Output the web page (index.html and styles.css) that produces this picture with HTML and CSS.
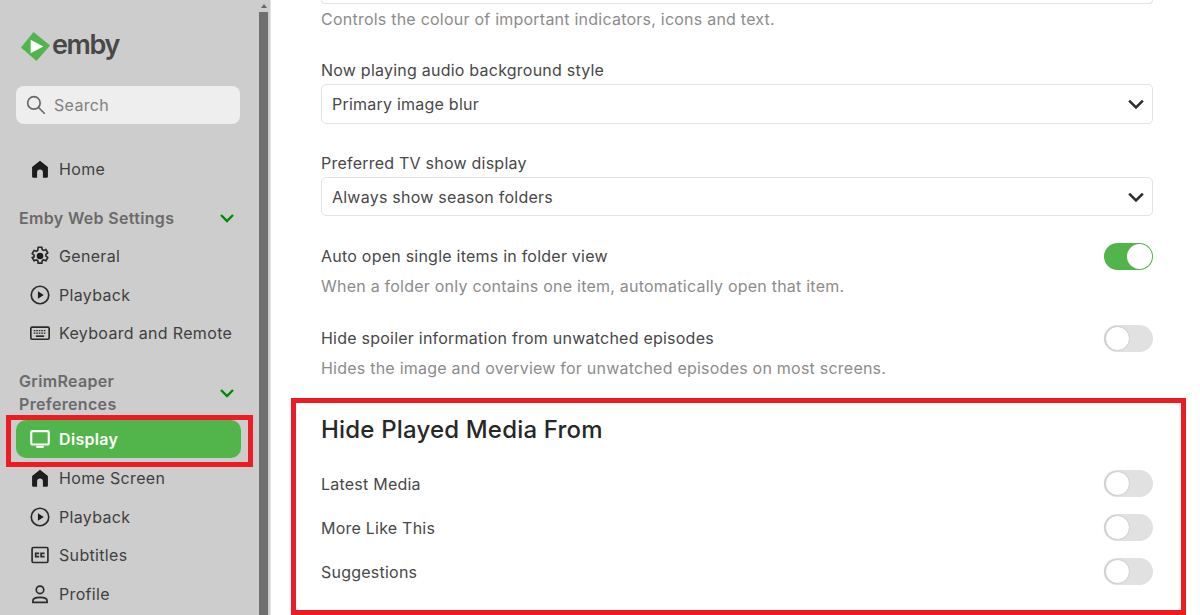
FILE: index.html
```html
<!DOCTYPE html>
<html lang="en">
  <head>
    <meta charset="UTF-8" />
    <title>Emby display settings</title>
    <link rel="stylesheet" href="styles.css">
  </head>
  <body>
    <div class="wrap">
      <!-- sidebar -->
      <aside class="side">
        <div class="side-in">
          <div class="logo">
            <svg class="logo-ic" viewBox="0 0 32 32">
              <polygon points="14,1 31,15 17,31 1,17" fill="#52b54b" />
              <polygon points="11,9 24,16 11,23" fill="#fff" />
            </svg>
            <span class="logo-txt">emby</span>
          </div>
          <div class="search">
            <svg class="ic-search" viewBox="0 0 24 24"><circle cx="9.500" cy="9.500" r="7.500" /><path d="M15 15l7.500 7.500" /></svg>
            <span>Search</span>
          </div>
          <a class="item item-home">
            <svg class="ic" viewBox="0 0 24 24"><path class="solid" d="M12 2L2.500 9.500V21a1.500 1.500 0 0 0 1.500 1.500h4.500V16a3.500 3.500 0 0 1 7 0v6.500H20a1.500 1.500 0 0 0 1.500-1.500V9.500z" /></svg>
            Home
          </a>
          <div class="group g1">
            <span>Emby Web Settings</span>
            <svg class="chev" viewBox="0 0 16 10"><path d="M2 2l6 6 6-6" /></svg>
          </div>
          <a class="item">
            <svg class="ic" viewBox="0 0 24 24"><path class="line" d="M9.800 1.500h4.400l.5 2.900 1.700.9 2.700-1 2.200 3.800-2.200 1.900v2l2.200 1.900-2.200 3.800-2.700-1-1.700.9-.5 2.900H9.800l-.5-2.900-1.700-.9-2.700 1-2.200-3.800L4.900 13v-2L2.700 9.100l2.200-3.800 2.700 1 1.700-.9z" /><circle class="solid" cx="12" cy="12" r="4" /></svg>
            General
          </a>
          <a class="item">
            <svg class="ic" viewBox="0 0 24 24"><circle class="line" cx="12" cy="12" r="10.500" /><polygon class="solid" points="9.500,7.500 16.500,12 9.500,16.500" /></svg>
            Playback
          </a>
          <a class="item">
            <svg class="ic" viewBox="0 0 24 24"><rect class="line" x="1" y="5" width="22" height="14.500" rx="1.500" /><path class="thin" d="M4.500 9h15M4.500 12h15" /><path class="line" d="M7 15.800h10" /></svg>
            Keyboard and Remote
          </a>
          <div class="group g2">
            <span>GrimReaper Preferences</span>
            <svg class="chev" viewBox="0 0 16 10"><path d="M2 2l6 6 6-6" /></svg>
          </div>
          <a class="item on">
            <svg class="ic" viewBox="0 0 24 24"><rect class="line line-w" x="1.500" y="2.500" width="21" height="16" rx="1" /><path class="line line-w" d="M7.500 21.500h9" /></svg>
            Display
          </a>
          <a class="item">
            <svg class="ic" viewBox="0 0 24 24"><path class="solid" d="M12 2L2.500 9.500V21a1.500 1.500 0 0 0 1.500 1.500h4.500V16a3.500 3.500 0 0 1 7 0v6.500H20a1.500 1.500 0 0 0 1.500-1.500V9.500z" /></svg>
            Home Screen
          </a>
          <a class="item">
            <svg class="ic" viewBox="0 0 24 24"><circle class="line" cx="12" cy="12" r="10.500" /><polygon class="solid" points="9.500,7.500 16.500,12 9.500,16.500" /></svg>
            Playback
          </a>
          <a class="item">
            <svg class="ic" viewBox="0 0 24 24"><rect class="line" x="2.500" y="3" width="19" height="18" rx="1.500" /><path class="line" d="M11 10H6.800v4H11M17.500 10h-4.200v4h4.200" /></svg>
            Subtitles
          </a>
          <a class="item">
            <svg class="ic" viewBox="0 0 24 24"><circle class="line" cx="12" cy="7" r="4.500" /><path class="line" d="M3.500 22v-2c0-2.500 4-4 8.500-4s8.500 1.500 8.500 4v2z" /></svg>
            Profile
          </a>
        </div>
        <div class="bar">
          <div class="bar-up"></div>
          <div class="bar-th"></div>
        </div>
      </aside>

      <!-- settings -->
      <main class="main">
        <div class="sel-end"></div>
        <p class="help help-top">Controls the colour of important indicators, icons and text.</p>

        <label class="lb lb-a">Now playing audio background style</label>
        <div class="sel">
          <span>Primary image blur</span>
          <svg class="sel-ar" viewBox="1 1 14 8"><path d="M2 2l6 6 6-6" /></svg>
        </div>

        <label class="lb lb-b">Preferred TV show display</label>
        <div class="sel sel-b">
          <span>Always show season folders</span>
          <svg class="sel-ar" viewBox="1 1 14 8"><path d="M2 2l6 6 6-6" /></svg>
        </div>

        <div class="row row-a">
          <span>Auto open single items in folder view</span>
          <i class="tg tg-on"></i>
        </div>
        <p class="help help-a">When a folder only contains one item, automatically open that item.</p>

        <div class="row row-b">
          <span>Hide spoiler information from unwatched episodes</span>
          <i class="tg"></i>
        </div>
        <p class="help help-b">Hides the image and overview for unwatched episodes on most screens.</p>

        <h2 class="ttl">Hide Played Media From</h2>
        <div class="row row-c"><span>Latest Media</span><i class="tg"></i></div>
        <div class="row row-c"><span>More Like This</span><i class="tg"></i></div>
        <div class="row row-c"><span>Suggestions</span><i class="tg"></i></div>
      </main>
    </div>

    <!-- red marks over the screenshot -->
    <div class="mark mark-nav"></div>
    <div class="mark mark-box"></div>
  </body>
</html>
```

FILE: styles.css
```css
html,
body {
  margin: 0;
  padding: 0;
  overflow: hidden;
}
body {
  width: 1200px;
  height: 615px;
  position: relative;
  background: #fff;
  font-family: Inter, "Liberation Sans", sans-serif;
  font-size: 16px;
  color: #484848;
}
.wrap {
  display: flex;
  height: 615px;
}

/* sidebar */
.side {
  display: flex;
  flex: 0 0 271px;
  height: 615px;
  background: #cdcdcd;
  overflow: hidden;
  box-sizing: border-box;
  border-right: 1px solid #e4e4e4;
  letter-spacing: 0.33px;
}
.side-in {
  flex: 1;
  min-width: 0;
  padding: 31px 19px 0 15px;
}
.logo {
  display: flex;
  align-items: center;
  gap: 1px;
  height: 30px;
  padding-left: 5px;
}
.logo-ic {
  width: 31px;
  height: 31px;
}
.logo-txt {
  margin-bottom: 2px;
  font-size: 27px;
  font-weight: 600;
  letter-spacing: -1.4px;
  color: #484848;
  line-height: 30px;
}
.search {
  display: flex;
  align-items: center;
  gap: 8px;
  height: 38px;
  margin: 25px 0 0 1px;
  padding-left: 10px;
  background: #eee;
  border-radius: 8px;
  color: #808080;
}
.ic-search {
  width: 20px;
  height: 22px;
  fill: none;
  stroke: #666;
  stroke-width: 2;
}
.item {
  display: flex;
  align-items: center;
  gap: 9px;
  height: 38.5px;
  padding-left: 15px;
  color: #404040;
  white-space: nowrap;
}
.item-home {
  margin-top: 26px;
}
.ic {
  flex: none;
  width: 20px;
  height: 20px;
}
.solid {
  fill: #1d1d1d;
}
.line {
  fill: none;
  stroke: #2a2a2a;
  stroke-width: 2;
}
.line-w {
  stroke: #fff;
  stroke-width: 2.5;
}
.thin {
  fill: none;
  stroke: #2a2a2a;
  stroke-width: 1.5;
  stroke-dasharray: 2 1;
}
.group {
  display: flex;
  align-items: center;
  justify-content: space-between;
  padding: 0 5px 0 4px;
  font-weight: 600;
  line-height: 23px;
  color: #6a6a6a;
}
.g1 {
  margin-top: 18.4px;
  margin-bottom: 7.3px;
}
.g2 {
  margin-top: 17.3px;
}
.g2 span {
  width: 120px;
}
.chev {
  flex: none;
  width: 16px;
  height: 10px;
  fill: none;
  stroke: #008a00;
  stroke-width: 2.4;
}
.on {
  height: 38px;
  margin: 4px -1px 1px 1px;
  padding-left: 14px;
  background: #52b54b;
  border-radius: 10px;
  color: #fff;
  font-weight: 600;
}
.bar {
  flex: 0 0 10px;
  margin-right: 1px;
}
.bar-up {
  width: 0;
  height: 0;
  margin: 4px 0 0 2px;
  border: 3px solid transparent;
  border-top: 0;
  border-bottom: 4px solid #666;
}
.bar-th {
  width: 9px;
  height: 603px;
  margin-top: 4px;
  background: #6f6f6f;
}

/* settings */
.main {
  flex: 1;
  min-width: 0;
  padding: 0 47px 0 50px;
  letter-spacing: 0.23px;
}
.sel-end {
  height: 3px;
  border: 1px solid #e3e3e3;
  border-top: 0;
  border-radius: 0 0 5px 5px;
}
.help {
  margin: 0;
  color: #8c8c8c;
  line-height: 24px;
}
.help-top {
  margin-top: 3px;
}
.lb {
  display: block;
  line-height: 24px;
}
.lb-a {
  margin-top: 27px;
  margin-bottom: 2px;
}
.lb-b {
  margin-top: 27px;
  margin-bottom: 2px;
}
.sel {
  display: flex;
  align-items: center;
  justify-content: space-between;
  box-sizing: border-box;
  height: 40px;
  padding: 0 8px 0 10px;
  border: 1px solid #e3e3e3;
  border-radius: 5px;
}
.sel-b {
  height: 39px;
}
.sel-ar {
  width: 16px;
  height: 10px;
  fill: none;
  stroke: #2c2c2c;
  stroke-width: 2.2;
}
.row {
  display: flex;
  align-items: center;
  justify-content: space-between;
}
.row-a {
  height: 28px;
  margin-top: 26px;
}
.help-a {
  margin-top: 4px;
}
.row-b {
  height: 28px;
  margin-top: 26px;
}
.help-b {
  margin-top: 4px;
}
.row-c {
  height: 44px;
}
.row-c .tg {
  margin-bottom: 2px;
}
.ttl {
  margin: 35px 0 17px;
  font-size: 24px;
  font-weight: 500;
  line-height: 30px;
  letter-spacing: 0.18px;
  color: #282828;
}
.tg {
  position: relative;
  display: block;
  width: 49px;
  height: 27px;
  border-radius: 14px;
  background: #e1e1e1;
}
.tg::after {
  content: "";
  position: absolute;
  top: 1px;
  left: 1px;
  box-sizing: border-box;
  width: 25px;
  height: 25px;
  border-radius: 50%;
  background: #fff;
  border: 1px solid #cfcfcf;
  box-shadow: -1px 0 1px #cfcfcf;
}
.tg-on {
  background: #52b54b;
}
.tg-on::after {
  left: 23px;
  border: 0;
  box-shadow: none;
}

/* red marks */
.mark {
  position: absolute;
  box-sizing: border-box;
  border: 5px solid #ed1c24;
}
.mark-nav {
  left: 6px;
  top: 415px;
  width: 247px;
  height: 52px;
}
.mark-box {
  left: 291px;
  top: 398px;
  width: 895px;
  height: 217px;
}
```
